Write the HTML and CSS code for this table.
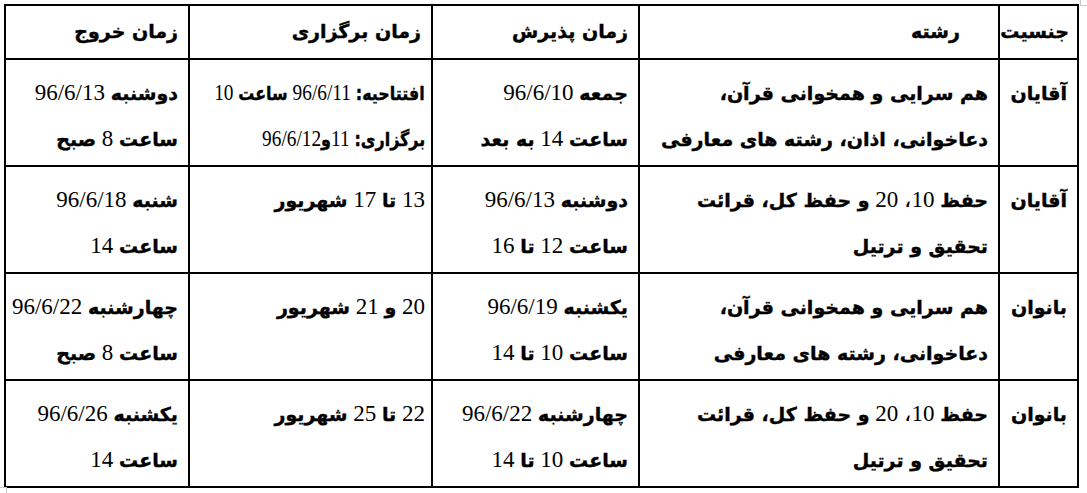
FILE: index.html
```html
<!DOCTYPE html>
<html lang="fa" dir="rtl">
<head>
<meta charset="utf-8">
<link rel="stylesheet" href="styles.css">
<title>جدول زمان‌بندی</title>
</head>
<body>
<div class="page">
  <table class="schedule">
    <colgroup>
      <col class="c-gender">
      <col class="c-field">
      <col class="c-admit">
      <col class="c-hold">
      <col class="c-exit">
    </colgroup>
    <thead>
      <tr>
        <th class="th-gender">جنسیت</th>
        <th class="th-field">رشته</th>
        <th>زمان پذیرش</th>
        <th>زمان برگزاری</th>
        <th>زمان خروج</th>
      </tr>
    </thead>
    <tbody>
      <tr>
        <td><b>آقایان</b></td>
        <td class="field"><b>هم سرایی و همخوانی قرآن،</b><br><b>دعاخوانی، اذان، رشته های معارفی</b></td>
        <td><b>جمعه</b> 96/6/10<br><b>ساعت</b> 14 <b>به بعد</b></td>
        <td class="hold"><span class="squeeze"><b>افتتاحیه:</b> 96/6/11 <b>ساعت</b> 10</span><br><span class="squeeze"><b>برگزاری:</b> 11<b>و</b>96/6/12</span></td>
        <td><b>دوشنبه</b> 96/6/13<br><b>ساعت</b> 8 <b>صبح</b></td>
      </tr>
      <tr>
        <td><b>آقایان</b></td>
        <td class="field"><b>حفظ</b> 10، 20 <b>و حفظ کل، قرائت</b><br><b>تحقیق و ترتیل</b></td>
        <td><b>دوشنبه</b> 96/6/13<br><b>ساعت</b> 12 <b>تا</b> 16</td>
        <td class="hold">13 <b>تا</b> 17 <b>شهریور</b></td>
        <td><b>شنبه</b> 96/6/18<br><b>ساعت</b> 14</td>
      </tr>
      <tr>
        <td><b>بانوان</b></td>
        <td class="field"><b>هم سرایی و همخوانی قرآن،</b><br><b>دعاخوانی، رشته های معارفی</b></td>
        <td><b>یکشنبه</b> 96/6/19<br><b>ساعت</b> 10 <b>تا</b> 14</td>
        <td class="hold">20 <b>و</b> 21 <b>شهریور</b></td>
        <td><b>چهارشنبه</b> 96/6/22<br><b>ساعت</b> 8 <b>صبح</b></td>
      </tr>
      <tr>
        <td><b>بانوان</b></td>
        <td class="field"><b>حفظ</b> 10، 20 <b>و حفظ کل، قرائت</b><br><b>تحقیق و ترتیل</b></td>
        <td><b>چهارشنبه</b> 96/6/22<br><b>ساعت</b> 10 <b>تا</b> 14</td>
        <td class="hold">22 <b>تا</b> 25 <b>شهریور</b></td>
        <td><b>یکشنبه</b> 96/6/26<br><b>ساعت</b> 14</td>
      </tr>
    </tbody>
  </table>
  <span class="mark mark-tr"></span>
  <span class="mark mark-bl"></span>
</div>
</body>
</html>
```

FILE: styles.css
```css
html, body {
  margin: 0;
  padding: 0;
  background: #ffffff;
}

body {
  font-family: "Liberation Serif", "DejaVu Sans", serif;
  color: #000000;
}

.page {
  position: relative;
  width: 1087px;
  height: 493px;
  padding: 4px 8px 0 6px;
  box-sizing: border-box;
}

.schedule {
  width: 1073px;
  border-collapse: collapse;
  table-layout: fixed;
  font-size: 23px;
}

.c-gender { width: 79px; }
.c-field { width: 360px; }
.c-admit { width: 207px; }
.c-hold { width: 243px; }
.c-exit { width: 184px; }

.schedule th,
.schedule td {
  border: 2px solid #000000;
  text-align: right;
  vertical-align: top;
  padding: 0 10px 0 2px;
  white-space: nowrap;
}

.schedule th {
  height: 54px;
  box-sizing: border-box;
  line-height: 50px;
  font-family: "DejaVu Sans", sans-serif;
  font-size: 19px;
  font-weight: bold;
  -webkit-text-stroke: 0.4px #000000;
}

.schedule th.th-gender {
  padding-right: 8px;
}

.schedule th.th-field {
  padding-right: 38px;
}

.schedule td {
  height: 107px;
  box-sizing: border-box;
  line-height: 45px;
  padding-top: 10px;
  font-weight: normal;
}

.schedule b {
  font-family: "DejaVu Sans", sans-serif;
  font-size: 19px;
  font-weight: bold;
  -webkit-text-stroke: 0.4px #000000;
}

.schedule td.hold {
  padding-right: 6px;
}

.squeeze {
  display: inline-block;
  transform: scaleX(0.84);
  transform-origin: right center;
}

.mark {
  position: absolute;
  width: 6px;
  height: 5px;
  border-color: #c8c8c8;
  border-style: solid;
  border-width: 0;
}

.mark-tr {
  top: 0;
  right: 0;
  border-left-width: 1px;
  border-bottom-width: 1px;
}

.mark-bl {
  bottom: 0;
  left: 0;
  border-right-width: 1px;
  border-top-width: 1px;
}
```
